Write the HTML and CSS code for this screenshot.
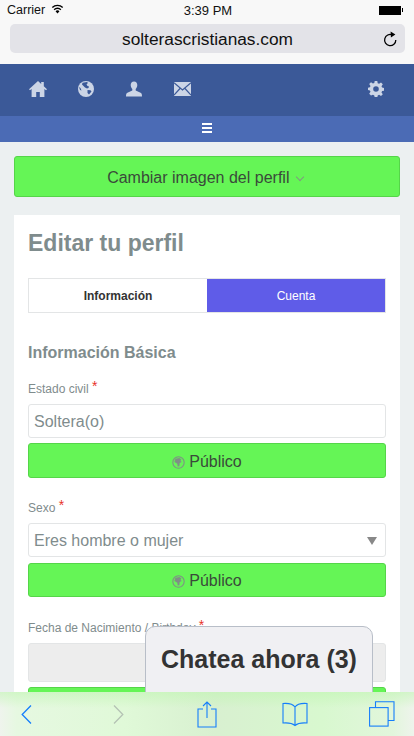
FILE: index.html
```html
<!DOCTYPE html>
<html lang="es">
<head>
<meta charset="utf-8">
<title>Editar tu perfil</title>
<link rel="stylesheet" href="styles.css">
</head>
<body>
<div class="screen">
  <header class="browser">
    <div class="status">
      <div class="status-left"><span>Carrier</span>
        <svg class="wifi" width="13" height="10" viewBox="0 0 14 10"><path d="M7 9.800 4.900 7.400a3 3 0 0 1 4.200 0z" fill="#000"/><path d="M3.400 5.700a5 5 0 0 1 7.200 0M1.400 3.400a8 8 0 0 1 11.200 0" fill="none" stroke="#000" stroke-width="1.500"/></svg>
      </div>
      <div class="status-time">3:39 PM</div>
      <div class="status-right"><span class="battery"></span><span class="battery-tip"></span></div>
    </div>
    <div class="address">
      <span class="url">solterascristianas.com</span>
      <svg class="reload" width="14" height="16" viewBox="0 0 14 16"><path d="M9.400 3.900A5.600 5.600 0 1 0 12.800 9" fill="none" stroke="#000" stroke-width="1.300"/><path d="M7.600.6 12.400 3.600 7.900 6.600z" fill="#000"/></svg>
    </div>
  </header>

  <nav class="navbar">
    <div class="nav-left">
      <svg width="18" height="16" viewBox="0 0 18 16"><path d="M9 0 0 8.200l1 1L2.600 8v8h4.600v-5h3.600v5h4.600V8L17 9.200l1-1L14.800 5.300V1h-2.600v2z" fill="#ccd5e6"/></svg>
      <svg width="16" height="16" viewBox="0 0 16 16"><circle cx="8" cy="8" r="8" fill="#ccd5e6"/><path d="M4.500 1.800 9 1l1 1-1.500 1.200L9.500 5l1.500.5-.5 1.500-1.500.5L7 6.500 5.500 5 4 3.500zM9.500 9l3 .2 1 1.300-2.500 3-1.500-1.500zM1 6l1.500 1 1 2.500L2 9z" fill="#3b5998"/></svg>
      <svg width="16" height="16" viewBox="0 0 17 16"><path d="M8.500 0C6.200 0 5 1.700 5 3.800c0 1.700.8 3.200 1.700 4.200v1.500L1.500 12C.5 12.500 0 13.300 0 16h17c0-2.700-.5-3.500-1.500-4l-5.200-2.500V8C11.200 7 12 5.500 12 3.800 12 1.700 10.800 0 8.500 0z" fill="#ccd5e6"/></svg>
      <svg width="17" height="14" viewBox="0 0 17 14"><rect width="17" height="14" fill="#ccd5e6"/><path d="M0 .8 8.500 8 17 .8M0 13.200 6 6.500M17 13.200 11 6.500" fill="none" stroke="#3b5998" stroke-width="1.200"/></svg>
    </div>
    <svg width="16" height="16" viewBox="0 0 16 16"><path fill-rule="evenodd" d="M6.700 0h2.600l.4 2.200 1.400.6 1.900-1.300 1.800 1.800-1.300 1.900.6 1.400 2.200.4v2.600l-2.200.4-.6 1.400 1.300 1.900-1.800 1.800-1.900-1.300-1.400.6-.4 2.200H6.700l-.4-2.200-1.400-.6L3 14.500l-1.800-1.800 1.300-1.900-.6-1.400L0 9V6.700l1.900-.4.6-1.400L1.200 3 3 1.200l1.900 1.300 1.400-.6zM8 5.200a2.800 2.800 0 1 0 0 5.600 2.800 2.800 0 0 0 0-5.600z" fill="#ccd5e6"/></svg>
  </nav>
  <div class="subnav"><span class="burger"></span></div>

  <main class="content">
    <button class="btn btn-wide">Cambiar imagen del perfil <span class="caret"></span></button>

    <section class="card">
      <h1 class="title">Editar tu perfil</h1>
      <div class="tabs">
        <div class="tab tab-info">Información</div>
        <div class="tab tab-account">Cuenta</div>
      </div>
      <h2 class="section">Información Básica</h2>

      <div class="field field-civil">
        <div class="label">Estado civil <span class="req">*</span></div>
        <div class="input">Soltera(o)</div>
        <button class="btn btn-public"><svg class="globe" width="13" height="13" viewBox="0 0 16 16"><circle cx="8" cy="8" r="7" fill="none" stroke="#7f8f86" stroke-width="1.300"/><path d="M4 3.500 9 2.500l2.500 1.500-1 2 1.500 1.500-2.500 1-.5 4L7 13l-.5-3.500L3 7.500z" fill="#7f8f86"/></svg>Público</button>
      </div>

      <div class="field field-sex">
        <div class="label">Sexo <span class="req">*</span></div>
        <div class="input">Eres hombre o mujer<span class="arrow"></span></div>
        <button class="btn btn-public btn-short"><svg class="globe" width="13" height="13" viewBox="0 0 16 16"><circle cx="8" cy="8" r="7" fill="none" stroke="#7f8f86" stroke-width="1.300"/><path d="M4 3.500 9 2.500l2.500 1.500-1 2 1.500 1.500-2.500 1-.5 4L7 13l-.5-3.500L3 7.500z" fill="#7f8f86"/></svg>Público</button>
      </div>

      <div class="field">
        <div class="label">Fecha de Nacimiento / Birthday <span class="req">*</span></div>
        <div class="input disabled"></div>
        <button class="btn btn-public"></button>
      </div>
    </section>
  </main>

  <div class="chat">Chatea ahora (3)</div>

  <footer class="toolbar">
    <svg class="tool-back" width="11" height="19" viewBox="0 0 11 19"><path d="M10 .5 1.200 9.500l8.800 9" fill="none" stroke="#157efb" stroke-width="1.300"/></svg>
    <svg class="tool-forward" width="11" height="19" viewBox="0 0 11 19"><path d="M1 .5l8.800 9-8.800 9" fill="none" stroke="#b4c2b4" stroke-width="1.300"/></svg>
    <svg class="tool-share" width="20" height="27" viewBox="0 0 20 27"><path d="M6 8H1v18h18V8h-5M10 17V1M6 5l4-4 4 4" fill="none" stroke="#157efb" stroke-width="1.100"/></svg>
    <svg class="tool-book" width="26" height="25" viewBox="0 0 26 25"><path d="M13 5C11 2 8 1 1 1.500v19.500c6-.5 9 0 12 2.500 3-2.500 6-3 12-2.500V1.500C18 1 15 2 13 5zM13 5v18" fill="none" stroke="#157efb" stroke-width="1.100"/></svg>
    <svg class="tool-tabs" width="26" height="26" viewBox="0 0 26 26"><path d="M6.500 6V.8h18.500v18.700H19" fill="none" stroke="#157efb" stroke-width="1.100"/><rect x=".6" y="6.600" width="18.500" height="18.500" fill="none" stroke="#157efb" stroke-width="1.100"/></svg>
  </footer>
</div>
</body>
</html>
```
FILE: styles.css
```css
* { box-sizing: border-box; }
html, body { margin: 0; padding: 0; }
body { font-family: "Liberation Sans", Arial, sans-serif; background: #ecf0f1; }
.screen { position: relative; width: 414px; height: 736px; overflow: hidden; background: #ecf0f1; }

.browser { height: 64px; background: #f8f8f8; padding: 0 9px 0 10px; }
.status { height: 20px; display: flex; align-items: center; justify-content: space-between; position: relative; color: #111; margin: 0 2px 4px -3px; }
.status-left { display: flex; align-items: center; gap: 6px; font-size: 12.500px; }
.wifi { margin-top: -3px; }
.status-time { position: absolute; left: 0; right: -6px; text-align: center; font-size: 13px; }
.status-right { display: flex; align-items: center; }
.battery { width: 22px; height: 9px; background: #000; }
.battery-tip { width: 1px; height: 4px; background: #000; margin-left: 1px; }
.address { height: 29px; background: #e3e3e8; border-radius: 5px; display: flex; align-items: center; justify-content: center; position: relative; }
.url { font-size: 17.300px; color: #111; position: relative; top: 1px; }
.reload { position: absolute; right: 8px; top: 7px; }

.navbar { height: 52px; background: #3b5998; display: flex; align-items: center; justify-content: space-between; padding: 0 30px 2px 14px; }
.nav-left { display: grid; grid-template-columns: repeat(4, 48px); justify-items: center; align-items: center; }
.subnav { height: 26px; background: #4b6bb5; display: flex; align-items: center; justify-content: center; padding-bottom: 2px; }
.burger { width: 10px; height: 10px; border-top: 2px solid #fff; border-bottom: 2px solid #fff; position: relative; }
.burger::after { content: ""; position: absolute; left: 0; right: 0; top: 2px; height: 2px; background: #fff; }

.content { padding: 14px 14px 0; }
.btn { display: block; width: 100%; background: #65f556; border: 1px solid #55d549; border-radius: 3px; color: #3a4a3a; font-family: inherit; text-align: center; padding: 0; }
.btn-wide { height: 41px; font-size: 16px; padding: 2px 4px 0 0; }
.caret { display: inline-block; width: 6px; height: 6px; border-right: 1px solid #809a80; border-bottom: 1px solid #809a80; transform: rotate(45deg); margin: 0 0 3px 3px; }

.card { margin-top: 18px; background: #fff; padding: 14px 14px 0; height: 520px; }
.title { margin: 0; font-size: 23px; line-height: 28px; font-weight: 700; color: #7f8c8d; }
.tabs { display: flex; margin-top: 21px; height: 35px; border: 1px solid #e3e5e6; }
.tab { flex: 1; display: flex; align-items: center; justify-content: center; font-size: 12px; }
.tab-info { color: #333; font-weight: 700; }
.tab-account { background: #5f5ce8; color: #fff; }
.section { margin: 30px 0 0; font-size: 16px; line-height: 19px; font-weight: 700; color: #7f8c8d; }

.field { margin-top: 23px; }
.field-civil { margin-top: 19px; }
.field-sex { margin-top: 22px; }
.label { font-size: 12px; line-height: 16px; color: #7f8c8d; white-space: nowrap; }
.req { color: #e8312a; font-size: 14px; line-height: 10px; position: relative; top: -2px; }
.input { margin-top: 7px; height: 34px; border: 1px solid #e3e5e6; border-radius: 3px; background: #fff; color: #7f8c8d; font-size: 16px; line-height: 33px; padding: 0 5px; position: relative; }
.arrow { position: absolute; right: 8px; top: 13px; width: 0; height: 0; border-left: 5px solid transparent; border-right: 5px solid transparent; border-top: 8px solid #888; }
.disabled { background: #ededed; height: 39px; margin-top: 7px; }
.btn-public { margin-top: 5px; height: 35px; font-size: 16px; display: flex; align-items: center; justify-content: center; gap: 4px; padding-top: 2px; }
.btn-short { margin-top: 6px; height: 34px; padding-top: 1px; }
.globe { margin-top: 2px; }

.chat { position: absolute; left: 145px; top: 626px; width: 228px; height: 80px; background: #f0f0f3; border: 1px solid #b8bec8; border-radius: 10px 10px 0 0; text-align: center; font-size: 25px; font-weight: 700; color: #333; line-height: 64px; }
.toolbar { position: absolute; left: 0; right: 0; bottom: 0; height: 44px; background: linear-gradient(180deg, rgba(190,245,175,.55) 0, rgba(210,248,200,0) 16px), linear-gradient(90deg, #eff4ed 0, #e6f8e1 4%, #e0f9d8 30%, #d8f0d0 52%, #d8f8cf 78%, #e2f6dc 95%, #eef4ec 100%); display: flex; align-items: center; padding-left: 21px; }
.tool-forward { margin-left: 81px; }
.tool-share { margin-left: 73px; }
.tool-book { margin-left: 65px; }
.tool-tabs { margin-left: 61px; }
```
